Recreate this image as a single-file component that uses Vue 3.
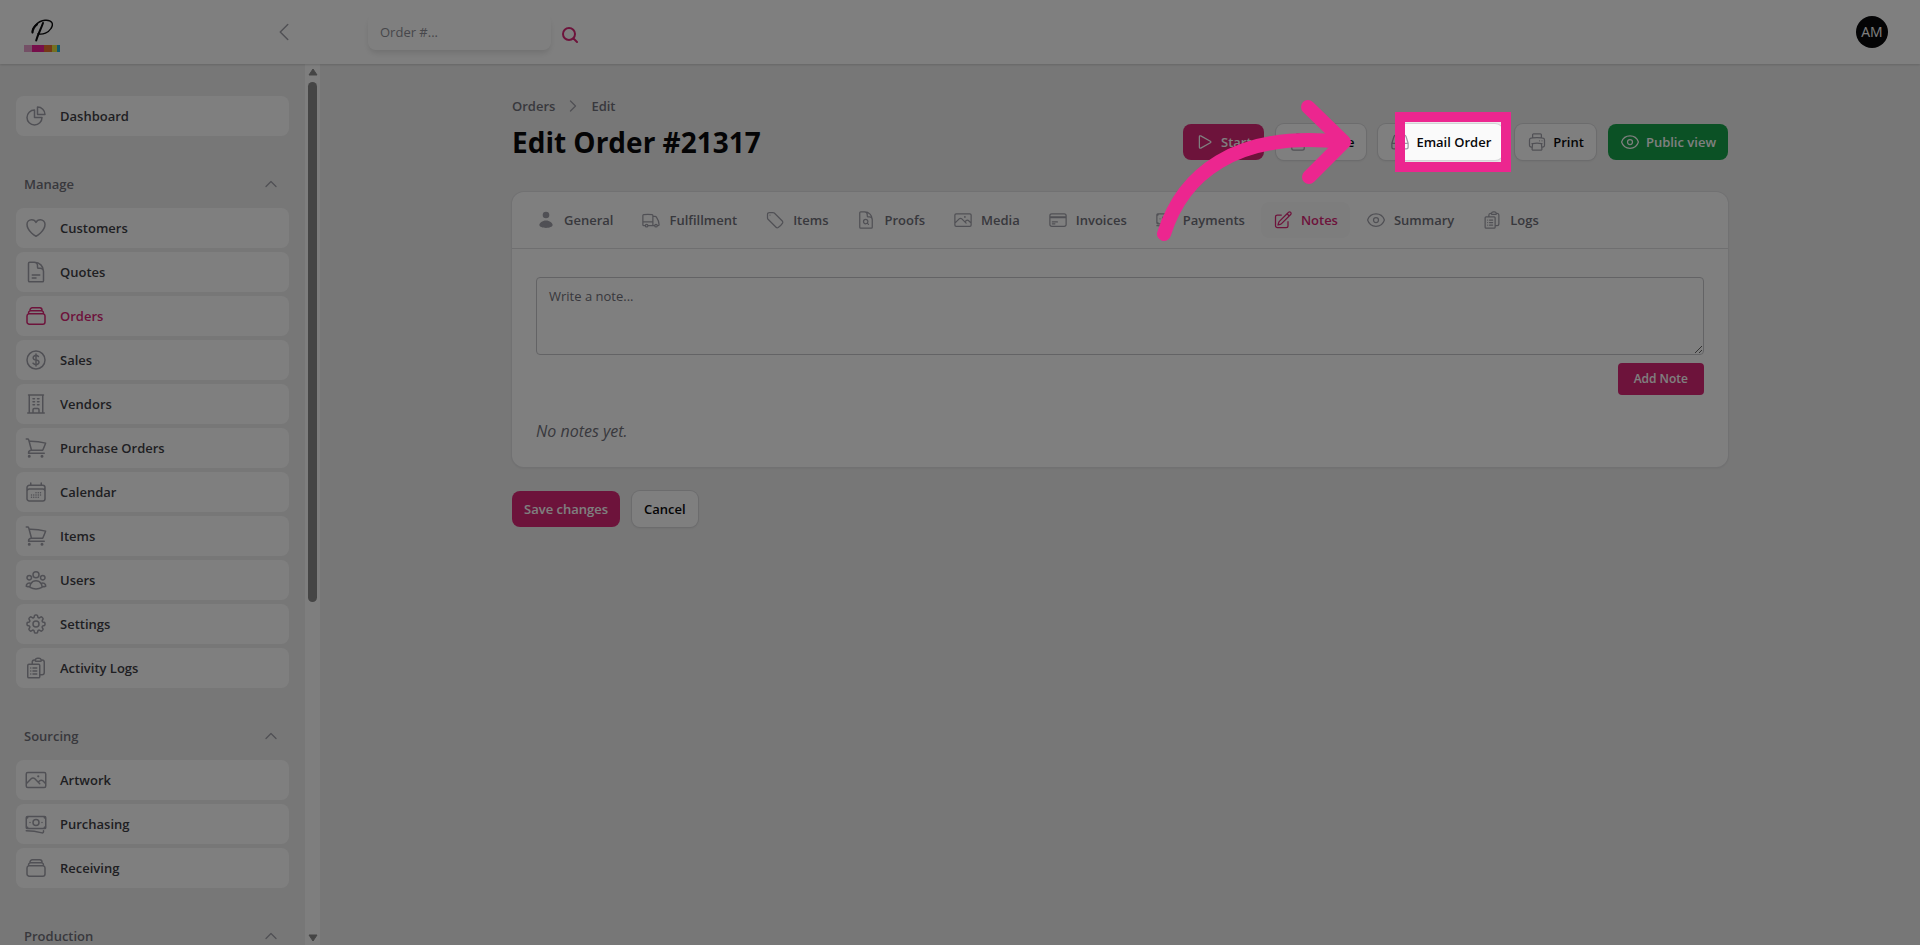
<template>
    <div class="layout">
        <header class="topbar">
            <div class="brand">
                <a class="logo" href="#" aria-label="Home">
                    <svg width="36" height="34" viewBox="0 0 36 34">
                        <g fill="none" stroke="#09090b" stroke-linecap="round">
                            <path stroke-width="2" d="M19 5C17 11 14 16 12.200 22.500"/>
                            <path stroke-width="1.400" d="M8.500 14.500C7 11 13 3 21 2.300C28 1.700 30 6 27 10.500C24.500 14.500 19 17 14 15.800"/>
                            <path stroke-width="2" d="M8.500 14.500C8.800 11.500 10.500 8.500 13 6.500"/>
                        </g>
                        <rect x="0" y="27" width="8" height="7" fill="#e8a0cc"/>
                        <rect x="8" y="27" width="12" height="7" fill="#ec1c94"/>
                        <rect x="20" y="27" width="8" height="7" fill="#e8702c"/>
                        <rect x="28" y="27" width="5" height="7" fill="#e8e040"/>
                        <rect x="33" y="27" width="3" height="7" fill="#20b0d8"/>
                    </svg>
                </a>
                <button class="icon-button" type="button" aria-label="Collapse sidebar">
                    <svg class="icon" viewBox="0 0 24 24"><path d="M15.750 19.500 8.250 12l7.500-7.500"/></svg>
                </button>
            </div>
            <form class="search" @submit.prevent>
                <input v-model="search" type="text" placeholder="Order #..." aria-label="Order number">
                <button class="icon-button" type="submit" aria-label="Search">
                    <svg viewBox="0 0 16 16" width="16" height="16"><circle cx="7" cy="7" r="6"/><path d="m11.500 11.500 3.500 3.500"/></svg>
                </button>
            </form>
            <button class="avatar" type="button">AM</button>
        </header>

        <div class="body">
            <aside class="sidebar">
                <nav class="menu">
                    <div v-for="group in groups" :key="group.label" class="group">
                        <button v-if="group.label" class="group-title" type="button">
                            {{ group.label }}
                            <svg class="icon chevron" viewBox="0 0 24 24"><path d="m4.500 15.750 7.500-7.500 7.500 7.500"/></svg>
                        </button>
                        <a v-for="item in group.items" :key="item.label" href="#" class="menu-item" :class="{ active: item.active }">
                            <svg class="icon large" viewBox="0 0 24 24"><path :d="icons[item.icon]"/></svg>
                            {{ item.label }}
                        </a>
                    </div>
                </nav>
                <div class="scrollbar">
                    <svg width="10" height="8" viewBox="0 0 10 8"><path d="M5 1 9 7H1Z"/></svg>
                    <div class="track"><div class="thumb"></div></div>
                    <svg width="10" height="8" viewBox="0 0 10 8"><path d="M1 1H9L5 7Z"/></svg>
                </div>
            </aside>

            <main class="content">
                <div class="heading">
                    <div>
                        <nav class="breadcrumbs">
                            <a href="#">Orders</a>
                            <svg class="icon" viewBox="0 0 24 24"><path d="m8.250 4.500 7.500 7.500-7.500 7.500"/></svg>
                            <a href="#">Edit</a>
                        </nav>
                        <h1>Edit Order #21317</h1>
                    </div>
                    <div class="actions">
                        <div v-for="action in actions" :key="action.label" class="action">
                            <button class="btn" :class="action.color" type="button">
                                <svg class="icon" viewBox="0 0 24 24"><path :d="icons[action.icon]"/></svg>
                                {{ action.label }}
                            </button>
                            <template v-if="action.spotlight">
                                <div class="spotlight"></div>
                                <svg class="arrow" width="210" height="152" viewBox="0 0 210 152">
                                    <path d="M14 139C32 81 84 35 192 47"/>
                                    <path d="M158 12 194 47 159 82"/>
                                </svg>
                            </template>
                        </div>
                    </div>
                </div>

                <section class="card">
                    <div class="tabs" role="tablist">
                        <button
                            v-for="tab in tabs"
                            :key="tab.label"
                            class="tab"
                            :class="{ active: tab.label === activeTab }"
                            type="button"
                            role="tab"
                            @click="activeTab = tab.label"
                        >
                            <svg class="icon" :class="{ solid: tab.solid }" viewBox="0 0 24 24"><path :d="icons[tab.icon]"/></svg>
                            {{ tab.label }}
                        </button>
                    </div>
                    <div class="notes">
                        <textarea v-model="note" placeholder="Write a note..." aria-label="Note"></textarea>
                        <button class="add-note" type="button">Add Note</button>
                        <p>No notes yet.</p>
                    </div>
                </section>

                <div class="form-actions">
                    <button class="btn primary" type="button">Save changes</button>
                    <button class="btn plain" type="button">Cancel</button>
                </div>
            </main>
        </div>
    </div>
</template>

<script setup>
    import { ref } from 'vue'

    const search = ref('')
    const note = ref('')
    const activeTab = ref('Notes')

    const icons = {
        pie: 'M10.5 6a7.5 7.5 0 1 0 7.5 7.5h-7.5V6Z M13.5 10.5H21A7.5 7.5 0 0 0 13.5 3v7.5Z',
        heart: 'M21 8.25c0-2.485-2.099-4.5-4.688-4.5-1.935 0-3.597 1.126-4.312 2.733-.715-1.607-2.377-2.733-4.313-2.733C5.1 3.75 3 5.765 3 8.25c0 7.22 9 12 9 12s9-4.78 9-12Z',
        document: 'M19.5 14.25v-2.625a3.375 3.375 0 0 0-3.375-3.375h-1.5A1.125 1.125 0 0 1 13.5 7.125v-1.5a3.375 3.375 0 0 0-3.375-3.375H8.25m0 12.75h7.5m-7.5 3H12M10.5 2.25H5.625c-.621 0-1.125.504-1.125 1.125v17.25c0 .621.504 1.125 1.125 1.125h12.75c.621 0 1.125-.504 1.125-1.125V11.25a9 9 0 0 0-9-9Z',
        stack: 'M6 6.878V6a2.25 2.25 0 0 1 2.25-2.25h7.5A2.25 2.25 0 0 1 18 6v.878m-12 0c.235-.083.487-.128.75-.128h10.5c.263 0 .515.045.75.128m-12 0A2.25 2.25 0 0 0 4.5 9v.878m13.5-3A2.25 2.25 0 0 1 19.5 9v.878m0 0a2.246 2.246 0 0 0-.75-.128H5.25c-.263 0-.515.045-.75.128m15 0A2.25 2.25 0 0 1 21 12v6a2.25 2.25 0 0 1-2.25 2.25H5.25A2.25 2.25 0 0 1 3 18v-6c0-.98.626-1.813 1.5-2.122',
        dollar: 'M12 6v12m-3-2.818.879.659c1.171.879 3.07.879 4.242 0 1.172-.879 1.172-2.303 0-3.182C13.536 12.219 12.768 12 12 12c-.725 0-1.45-.22-2.003-.659-1.106-.879-1.106-2.303 0-3.182s2.9-.879 4.006 0l.415.33M21 12a9 9 0 1 1-18 0 9 9 0 0 1 18 0Z',
        building: 'M3.75 21h16.5M4.5 3h15M5.25 3v18m13.5-18v18M9 6.75h1.5m-1.5 3h1.5m-1.5 3h1.5m3-6H15m-1.5 3H15m-1.5 3H15M9 21v-3.375c0-.621.504-1.125 1.125-1.125h3.75c.621 0 1.125.504 1.125 1.125V21',
        cart: 'M2.25 3h1.386c.51 0 .955.343 1.087.835l.383 1.437M7.5 14.25a3 3 0 0 0-3 3h15.75m-12.75-3h11.218c1.121-2.3 2.1-4.684 2.924-7.138a60.114 60.114 0 0 0-16.536-1.84M7.5 14.25 5.106 5.272M6 20.25a.75.75 0 1 1-1.5 0 .75.75 0 0 1 1.5 0Zm12.75 0a.75.75 0 1 1-1.5 0 .75.75 0 0 1 1.5 0Z',
        calendar: 'M6.75 3v2.25M17.25 3v2.25M3 18.75V7.5a2.25 2.25 0 0 1 2.25-2.25h13.5A2.25 2.25 0 0 1 21 7.5v11.25m-18 0A2.25 2.25 0 0 0 5.25 21h13.5A2.25 2.25 0 0 0 21 18.75m-18 0v-7.5A2.25 2.25 0 0 1 5.25 9h13.5A2.25 2.25 0 0 1 21 11.25v7.5m-9-6h.008v.008H12v-.008ZM12 15h.008v.008H12V15Zm0 2.25h.008v.008H12v-.008ZM9.75 15h.008v.008H9.75V15Zm0 2.25h.008v.008H9.75v-.008ZM7.5 15h.008v.008H7.5V15Zm0 2.25h.008v.008H7.5v-.008Zm6.75-4.5h.008v.008h-.008v-.008Zm0 2.25h.008v.008h-.008V15Zm0 2.25h.008v.008h-.008v-.008Zm2.25-4.5h.008v.008H16.5v-.008Zm0 2.25h.008v.008H16.5V15Z',
        users: 'M18 18.72a9.094 9.094 0 0 0 3.741-.479 3 3 0 0 0-4.682-2.72m.94 3.198.001.031c0 .225-.012.447-.037.666A11.944 11.944 0 0 1 12 21c-2.17 0-4.207-.576-5.963-1.584A6.062 6.062 0 0 1 6 18.719m12 0a5.971 5.971 0 0 0-.941-3.197m0 0A5.995 5.995 0 0 0 12 12.75a5.995 5.995 0 0 0-5.058 2.772m0 0a3 3 0 0 0-4.681 2.72 8.986 8.986 0 0 0 3.74.477m.94-3.197a5.971 5.971 0 0 0-.94 3.197M15 6.75a3 3 0 1 1-6 0 3 3 0 0 1 6 0Zm6 3a2.25 2.25 0 1 1-4.5 0 2.25 2.25 0 0 1 4.5 0Zm-13.5 0a2.25 2.25 0 1 1-4.5 0 2.25 2.25 0 0 1 4.5 0Z',
        cog: 'M10.343 3.94c.09-.542.56-.94 1.11-.94h1.093c.55 0 1.02.398 1.11.94l.149.894c.07.424.384.764.78.93.398.164.855.142 1.205-.108l.737-.527a1.125 1.125 0 0 1 1.45.12l.773.774c.39.389.44 1.002.12 1.45l-.527.737c-.25.35-.272.806-.107 1.204.165.397.505.71.93.78l.893.15c.543.09.94.559.94 1.109v1.094c0 .55-.397 1.02-.94 1.11l-.894.149c-.424.07-.764.383-.929.78-.165.398-.143.854.107 1.204l.527.738c.32.447.269 1.06-.12 1.45l-.774.773a1.125 1.125 0 0 1-1.449.12l-.738-.527c-.35-.25-.806-.272-1.203-.107-.398.165-.71.505-.781.929l-.149.894c-.09.542-.56.94-1.11.94h-1.094c-.55 0-1.019-.398-1.11-.94l-.148-.894c-.071-.424-.384-.764-.781-.93-.398-.164-.854-.142-1.204.108l-.738.527c-.447.32-1.06.269-1.45-.12l-.773-.774a1.125 1.125 0 0 1-.12-1.45l.527-.737c.25-.35.272-.806.108-1.204-.165-.397-.506-.71-.93-.78l-.894-.15c-.542-.09-.94-.56-.94-1.109v-1.094c0-.55.398-1.02.94-1.11l.894-.149c.424-.07.765-.383.93-.78.165-.398.143-.854-.108-1.204l-.526-.738a1.125 1.125 0 0 1 .12-1.45l.773-.773a1.125 1.125 0 0 1 1.45-.12l.737.527c.35.25.807.272 1.204.107.397-.165.71-.505.78-.929l.15-.894Z M15 12a3 3 0 1 1-6 0 3 3 0 0 1 6 0Z',
        clipboard: 'M9 12h3.75M9 15h3.75M9 18h3.75m3 .75H18a2.25 2.25 0 0 0 2.25-2.25V6.108c0-1.135-.845-2.098-1.976-2.192a48.424 48.424 0 0 0-1.123-.08m-5.801 0c-.065.21-.1.433-.1.664 0 .414.336.75.75.75h4.5a.75.75 0 0 0 .75-.75 2.25 2.25 0 0 0-.1-.664m-5.8 0A2.251 2.251 0 0 1 13.5 2.25H15c1.012 0 1.867.668 2.15 1.586m-5.8 0c-.376.023-.75.05-1.124.08C9.095 4.01 8.25 4.973 8.25 6.108V8.25m0 0H4.875c-.621 0-1.125.504-1.125 1.125v11.25c0 .621.504 1.125 1.125 1.125h9.75c.621 0 1.125-.504 1.125-1.125V9.375c0-.621-.504-1.125-1.125-1.125H8.25ZM6.75 12h.008v.008H6.75V12Zm0 3h.008v.008H6.75V15Zm0 3h.008v.008H6.75V18Z',
        photo: 'm2.25 15.75 5.159-5.159a2.25 2.25 0 0 1 3.182 0l5.159 5.159m-1.5-1.5 1.409-1.409a2.25 2.25 0 0 1 3.182 0l2.909 2.909m-18 3.75h16.5a1.5 1.5 0 0 0 1.5-1.5V6a1.5 1.5 0 0 0-1.5-1.5H3.75A1.5 1.5 0 0 0 2.25 6v12a1.5 1.5 0 0 0 1.5 1.5Zm10.5-11.25h.008v.008h-.008V8.25Zm.375 0a.375.375 0 1 1-.75 0 .375.375 0 0 1 .75 0Z',
        banknotes: 'M2.25 18.75a60.07 60.07 0 0 1 15.797 2.101c.727.198 1.453-.342 1.453-1.096V18.75M3.75 4.5v.75A.75.75 0 0 1 3 6h-.75m0 0v-.375c0-.621.504-1.125 1.125-1.125H20.25M2.25 6v9m18-10.5v.75c0 .414.336.75.75.75h.75m-1.5-1.5h.375c.621 0 1.125.504 1.125 1.125v9.75c0 .621-.504 1.125-1.125 1.125h-.375m1.5-1.5H21a.75.75 0 0 0-.75.75v.75m0 0H3.75m0 0h-.375a1.125 1.125 0 0 1-1.125-1.125V15m1.5 1.5v-.75A.75.75 0 0 0 3 15h-.75M15 10.5a3 3 0 1 1-6 0 3 3 0 0 1 6 0Zm3 0h.008v.008H18V10.5Zm-12 0h.008v.008H6V10.5Z',
        person: 'M8 6a4 4 0 1 0 8 0a4 4 0 1 0-8 0Z M12 12.500c4.500 0 8 3 8 5.500c0 2-4 3.500-8 3.500s-8-1.500-8-3.500c0-2.500 3.500-5.500 8-5.500Z',
        truck: 'M8.25 18.75a1.5 1.5 0 0 1-3 0m3 0a1.5 1.5 0 0 0-3 0m3 0h6m-9 0H3.375a1.125 1.125 0 0 1-1.125-1.125V14.25m17.25 4.5a1.5 1.5 0 0 1-3 0m3 0a1.5 1.5 0 0 0-3 0m3 0h1.125c.621 0 1.129-.504 1.09-1.124a17.902 17.902 0 0 0-3.213-9.193 2.056 2.056 0 0 0-1.58-.86H14.25M16.5 18.75h-2.25m0-11.177v-.958c0-.568-.422-1.048-.987-1.106a48.554 48.554 0 0 0-10.026 0 1.106 1.106 0 0 0-.987 1.106v7.635m12-6.677v6.677m0 4.5v-4.5m0 0h-12',
        tag: 'M9.568 3H5.25A2.25 2.25 0 0 0 3 5.25v4.318c0 .597.237 1.17.659 1.591l9.581 9.581c.699.699 1.78.872 2.607.33a18.095 18.095 0 0 0 5.223-5.223c.542-.827.369-1.908-.33-2.607L11.16 3.66A2.25 2.25 0 0 0 9.568 3Z M6 6h.008v.008H6V6Z',
        proof: 'M19.5 14.25v-2.625a3.375 3.375 0 0 0-3.375-3.375h-1.5A1.125 1.125 0 0 1 13.5 7.125v-1.5a3.375 3.375 0 0 0-3.375-3.375H8.25m5.231 13.481L15 17.25m-4.5-15H5.625c-.621 0-1.125.504-1.125 1.125v17.25c0 .621.504 1.125 1.125 1.125h12.75c.621 0 1.125-.504 1.125-1.125V11.25a9 9 0 0 0-9-9Zm3.75 11.625a2.625 2.625 0 1 1-5.25 0 2.625 2.625 0 0 1 5.25 0Z',
        card: 'M2.25 8.25h19.5M2.25 9h19.5m-16.5 5.25h6m-6 2.25h3m-3.75 3h15a2.25 2.25 0 0 0 2.25-2.25V6.75A2.25 2.25 0 0 0 19.5 4.5h-15a2.25 2.25 0 0 0-2.25 2.25v10.5A2.25 2.25 0 0 0 4.5 19.5Z',
        pencil: 'm16.862 4.487 1.687-1.688a1.875 1.875 0 1 1 2.652 2.652L10.582 16.07a4.5 4.5 0 0 1-1.897 1.13L6 18l.8-2.685a4.5 4.5 0 0 1 1.13-1.897l8.932-8.931Zm0 0L19.5 7.125M18 14v4.75A2.25 2.25 0 0 1 15.75 21H5.25A2.25 2.25 0 0 1 3 18.75V8.25A2.25 2.25 0 0 1 5.25 6H10',
        eye: 'M2.036 12.322a1.012 1.012 0 0 1 0-.639C3.423 7.51 7.36 4.5 12 4.5c4.638 0 8.573 3.007 9.963 7.178.07.207.07.431 0 .639C20.577 16.49 16.64 19.5 12 19.5c-4.638 0-8.573-3.007-9.963-7.178Z M15 12a3 3 0 1 1-6 0 3 3 0 0 1 6 0Z',
        printer: 'M6.72 13.829c-.24.03-.48.062-.72.096m.72-.096a42.415 42.415 0 0 1 10.56 0m-10.56 0L6.34 18m10.94-4.171c.24.03.48.062.72.096m-.72-.096L17.66 18m0 0 .229 2.523a1.125 1.125 0 0 1-1.12 1.227H7.231c-.662 0-1.18-.568-1.12-1.227L6.34 18m11.318 0h1.091A2.25 2.25 0 0 0 21 15.75V9.456c0-1.081-.768-2.015-1.837-2.175a48.055 48.055 0 0 0-1.913-.247M6.34 18H5.25A2.25 2.25 0 0 1 3 15.75V9.456c0-1.081.768-2.015 1.837-2.175a48.041 48.041 0 0 1 1.913-.247m10.5 0a48.536 48.536 0 0 0-10.5 0m10.5 0V3.375c0-.621-.504-1.125-1.125-1.125h-8.25c-.621 0-1.125.504-1.125 1.125v3.659M18 10.5h.008v.008H18V10.5Zm-3 0h.008v.008H15V10.5Z',
        play: 'M5.25 5.653c0-.856.917-1.398 1.667-.986l11.54 6.347a1.125 1.125 0 0 1 0 1.972l-11.54 6.347a1.125 1.125 0 0 1-1.667-.986V5.653Z',
        lock: 'M16.5 10.5V6.75a4.5 4.5 0 1 0-9 0v3.75m-.75 11.25h10.5a2.25 2.25 0 0 0 2.25-2.25v-6.75a2.25 2.25 0 0 0-2.25-2.25H6.75a2.25 2.25 0 0 0-2.25 2.25v6.75a2.25 2.25 0 0 0 2.25 2.25Z',
        inbox: 'M2.25 13.5h3.86a2.25 2.25 0 0 1 2.012 1.244l.256.512a2.25 2.25 0 0 0 2.013 1.244h3.218a2.25 2.25 0 0 0 2.013-1.244l.256-.512a2.25 2.25 0 0 1 2.013-1.244h3.859m-19.5.338V18a2.25 2.25 0 0 0 2.25 2.25h15A2.25 2.25 0 0 0 21.75 18v-4.162c0-.224-.034-.447-.1-.661L19.24 5.338a2.25 2.25 0 0 0-2.15-1.588H6.911a2.25 2.25 0 0 0-2.15 1.588L2.35 13.177a2.25 2.25 0 0 0-.1.661Z'
    }

    const groups = [
        { label: '', items: [{ label: 'Dashboard', icon: 'pie' }] },
        {
            label: 'Manage',
            items: [
                { label: 'Customers', icon: 'heart' },
                { label: 'Quotes', icon: 'document' },
                { label: 'Orders', icon: 'stack', active: true },
                { label: 'Sales', icon: 'dollar' },
                { label: 'Vendors', icon: 'building' },
                { label: 'Purchase Orders', icon: 'cart' },
                { label: 'Calendar', icon: 'calendar' },
                { label: 'Items', icon: 'cart' },
                { label: 'Users', icon: 'users' },
                { label: 'Settings', icon: 'cog' },
                { label: 'Activity Logs', icon: 'clipboard' }
            ]
        },
        {
            label: 'Sourcing',
            items: [
                { label: 'Artwork', icon: 'photo' },
                { label: 'Purchasing', icon: 'banknotes' },
                { label: 'Receiving', icon: 'stack' }
            ]
        },
        { label: 'Production', items: [] }
    ]

    const actions = [
        { label: 'Start', icon: 'play', color: 'primary' },
        { label: 'Delete', icon: 'lock', color: 'plain' },
        { label: 'Email Order', icon: 'inbox', color: 'plain', spotlight: true },
        { label: 'Print', icon: 'printer', color: 'plain' },
        { label: 'Public view', icon: 'eye', color: 'success' }
    ]

    const tabs = [
        { label: 'General', icon: 'person', solid: true },
        { label: 'Fulfillment', icon: 'truck' },
        { label: 'Items', icon: 'tag' },
        { label: 'Proofs', icon: 'proof' },
        { label: 'Media', icon: 'photo' },
        { label: 'Invoices', icon: 'card' },
        { label: 'Payments', icon: 'banknotes' },
        { label: 'Notes', icon: 'pencil' },
        { label: 'Summary', icon: 'eye' },
        { label: 'Logs', icon: 'clipboard' }
    ]
</script>

<style>
    body {
        margin: 0;
        background-color: #efefef;
    }
</style>

<style scoped>
    * {
        box-sizing: border-box;
    }

    .layout {
        height: 100vh;
        display: flex;
        flex-direction: column;
        overflow: hidden;
        font-family: "Open Sans", "Noto Sans", sans-serif;
        font-size: 13px;
        line-height: 20px;
        color: #09090b;
    }

    button,
    input,
    textarea {
        font: inherit;
        color: inherit;
    }

    button {
        border: none;
        background: none;
        padding: 0;
        cursor: pointer;
    }

    a {
        color: inherit;
        text-decoration: none;
    }

    .icon {
        width: 20px;
        height: 20px;
        flex-shrink: 0;
        fill: none;
        stroke: #a1a1aa;
        stroke-width: 1.5;
        stroke-linecap: round;
        stroke-linejoin: round;
    }

    .icon.large {
        width: 24px;
        height: 24px;
    }

    .icon.solid {
        fill: #a1a1aa;
        stroke: none;
    }

    .topbar {
        height: 64px;
        flex-shrink: 0;
        display: flex;
        align-items: center;
        padding-right: 32px;
        background-color: #fff;
        box-shadow: 0 1px 2px rgba(0, 0, 0, 0.15);
        z-index: 0;
    }

    .brand {
        width: 320px;
        padding: 0 24px;
        display: flex;
        align-items: center;
        justify-content: space-between;
    }

    .brand .icon {
        width: 24px;
        height: 24px;
    }

    .logo,
    .icon-button {
        display: flex;
    }

    .logo {
        padding-top: 5px;
    }

    .search {
        display: flex;
        align-items: center;
        gap: 11px;
        margin-left: 48px;
    }

    .search input {
        width: 183px;
        height: 36px;
        padding: 0 12px;
        border: none;
        border-radius: 8px;
        background-color: #fff;
        box-shadow: 0 4px 6px -1px rgba(0, 0, 0, 0.12);
    }

    .search input::placeholder {
        color: #8e8e96;
    }

    .search svg {
        margin-top: 6px;
        fill: none;
        stroke: #db2777;
        stroke-width: 2;
        stroke-linecap: round;
    }

    .avatar {
        width: 32px;
        height: 32px;
        margin-left: auto;
        border-radius: 50%;
        background-color: #09090b;
        color: #fff;
        font-size: 14px;
    }

    .body {
        flex: 1;
        min-height: 0;
        display: flex;
    }

    .sidebar {
        width: 320px;
        flex-shrink: 0;
        display: flex;
    }

    .menu {
        flex: 1;
        display: flex;
        flex-direction: column;
        gap: 28px;
        padding: 32px 16px 0;
        overflow: hidden;
    }

    .group {
        display: flex;
        flex-direction: column;
        gap: 4px;
    }

    .group-title {
        height: 40px;
        display: flex;
        align-items: center;
        justify-content: space-between;
        padding: 0 8px;
        color: #71717a;
        font-weight: 600;
    }

    .chevron {
        width: 16px;
        height: 16px;
        margin-right: 2px;
        stroke-width: 2;
    }

    .menu-item {
        height: 40px;
        flex-shrink: 0;
        display: flex;
        align-items: center;
        gap: 12px;
        padding: 0 8px;
        border-radius: 8px;
        background-color: #fff;
        color: #3f3f46;
        font-weight: 600;
    }

    .menu-item.active {
        color: #db2777;
    }

    .menu-item.active .icon,
    .tab.active .icon {
        stroke: #db2777;
    }

    .scrollbar {
        width: 15px;
        display: flex;
        flex-direction: column;
        align-items: center;
        gap: 6px;
        padding: 4px 0 3px;
        background-color: #fcfcfc;
    }

    .scrollbar svg {
        fill: #8b8b8b;
        stroke: #8b8b8b;
        stroke-linejoin: round;
    }

    .track {
        flex: 1;
    }

    .thumb {
        width: 9px;
        height: 61.5%;
        border-radius: 5px;
        background-color: #8b8b8b;
    }

    .content {
        flex: 1;
        max-width: 1280px;
        margin: 0 auto;
        padding: 32px;
    }

    .heading {
        display: flex;
        align-items: flex-end;
        justify-content: space-between;
        margin-bottom: 32px;
    }

    .breadcrumbs {
        display: flex;
        align-items: center;
        gap: 10px;
        margin-bottom: 8px;
        color: #71717a;
        font-weight: 600;
    }

    .breadcrumbs .icon {
        width: 16px;
        height: 16px;
        stroke-width: 2;
    }

    h1 {
        margin: 0;
        font-size: 28px;
        line-height: 36px;
        font-weight: 700;
    }

    .actions,
    .form-actions {
        display: flex;
        gap: 12px;
    }

    .action {
        position: relative;
    }

    .btn {
        height: 36px;
        display: flex;
        align-items: center;
        gap: 6px;
        padding: 0 12px;
        border-radius: 8px;
        font-weight: 600;
        white-space: nowrap;
    }

    .primary,
    .success {
        color: #fff;
    }

    .primary {
        background-color: #db2777;
    }

    .success {
        background-color: #16a34a;
    }

    .primary .icon,
    .success .icon {
        stroke: #fff;
    }

    .plain {
        background-color: #fff;
        box-shadow: 0 0 0 1px #d8d8da, 0 1px 3px rgba(0, 0, 0, 0.1);
    }

    /* everything outside the spotlight is dimmed by its spread shadow */
    .spotlight {
        position: absolute;
        inset: -12px -8px -12px 17px;
        border: 10px solid #ec268f;
        background-color: rgba(0, 0, 0, 0.02);
        box-shadow: 0 0 0 3000px rgba(0, 0, 0, 0.5);
        pointer-events: none;
        z-index: 10;
    }

    .arrow {
        position: absolute;
        top: -29px;
        left: -228px;
        fill: none;
        stroke: #ec268f;
        stroke-width: 14;
        stroke-linecap: round;
        stroke-linejoin: round;
        pointer-events: none;
        z-index: 11;
    }

    .card {
        border-radius: 12px;
        background-color: #fff;
        box-shadow: 0 0 0 1px #e2e2e4, 0 1px 3px rgba(0, 0, 0, 0.1);
    }

    .tabs {
        display: flex;
        gap: 4px;
        padding: 10px 12px;
        border-bottom: 1px solid #dedee0;
    }

    .tab {
        height: 36px;
        display: flex;
        align-items: center;
        gap: 8px;
        padding: 0 12px;
        border-radius: 8px;
        color: #71717a;
        font-weight: 600;
    }

    .tab.active {
        background-color: #fafafa;
        color: #db2777;
    }

    .notes {
        display: flex;
        flex-direction: column;
        padding: 28px 24px 24px;
    }

    .notes textarea {
        height: 78px;
        padding: 8px 12px;
        border: 1px solid #c6c6ca;
        border-radius: 4px;
        background-color: #fff;
        resize: vertical;
    }

    .notes textarea::placeholder {
        color: #71717a;
    }

    .add-note {
        height: 32px;
        align-self: flex-end;
        margin-top: 8px;
        padding: 0 16px;
        border-radius: 4px;
        background-color: #db2777;
        color: #fff;
        font-size: 12px;
        font-weight: 600;
    }

    .notes p {
        margin: 24px 0 0;
        color: #71717a;
        font-size: 16px;
        line-height: 24px;
        font-style: italic;
    }

    .form-actions {
        margin-top: 24px;
    }
</style>
